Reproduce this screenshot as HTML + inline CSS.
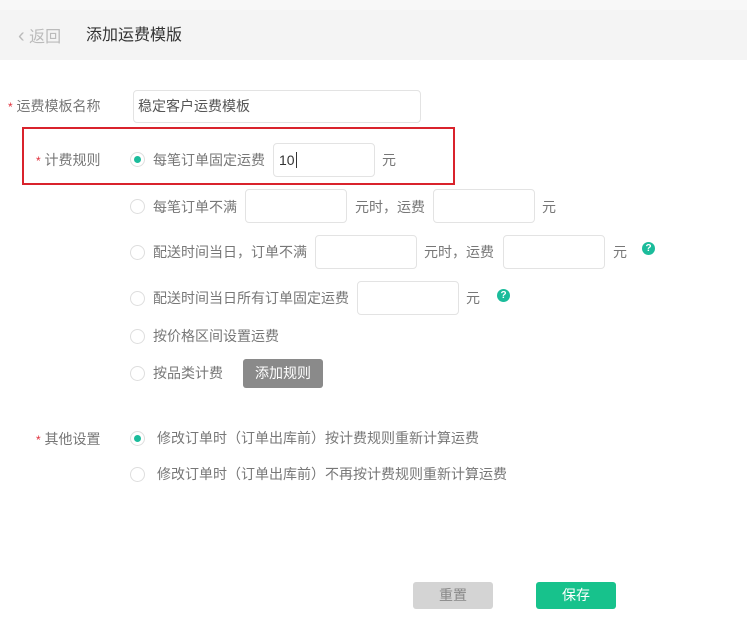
<!DOCTYPE html>
<html><head><meta charset="utf-8"><style>
*{margin:0;padding:0;box-sizing:border-box}
body{width:747px;height:619px;background:#fff;position:relative;overflow:hidden;font-family:"Liberation Sans","Noto Sans CJK SC",sans-serif;font-size:14px;color:#777}
.a{position:absolute;white-space:nowrap;line-height:16px}
.top{position:absolute;left:0;top:0;width:747px;height:10px;background:#f8f8f8}
.hd{position:absolute;left:0;top:10px;width:747px;height:50px;background:#f4f4f4}
.in{position:absolute;border:1px solid #e3e3e3;border-radius:4px;background:#fff;height:34px}
.r{position:absolute;width:15px;height:15px;border:1px solid #dedede;border-radius:50%;background:#fff}
.r.on::after{content:"";position:absolute;left:3px;top:3px;width:7px;height:7px;border-radius:50%;background:#1bbc9b}
.st{color:#e0303c;font-size:12px}
.q{position:absolute;width:13px;height:13px;border-radius:50%;background:#1bbc9b;color:#fff;font-size:10px;font-weight:bold;text-align:center;line-height:13px}
.btn{position:absolute;border-radius:3px;text-align:center;color:#fff;font-size:14px}
</style></head><body>
<div class="top"></div>
<div class="hd"></div>
<div class="a" style="left:18px;top:27px;font-size:16px;color:#bbb;line-height:18px"><span style="font-size:20px">‹</span> 返回</div>
<div class="a" style="left:86px;top:27px;font-size:16px;color:#333;line-height:18px">添加运费模版</div>

<div class="a" style="left:8px;top:98px"><span class="st">*</span> 运费模板名称</div>
<div class="in" style="left:133px;top:90px;width:288px;height:33px"></div>
<div class="a" style="left:138px;top:98px;color:#555">稳定客户运费模板</div>

<div style="position:absolute;left:22px;top:127px;width:433px;height:58px;border:2px solid #d9232c"></div>
<div class="a" style="left:36px;top:152px"><span class="st">*</span> 计费规则</div>
<div class="r on" style="left:130px;top:152px"></div>
<div class="a" style="left:153px;top:152px">每笔订单固定运费</div>
<div class="in" style="left:273px;top:143px;width:102px;height:34px"></div>
<div class="a" style="left:279px;top:152px;color:#333">10<span style="border-left:1px solid #333;margin-left:1px"></span></div>
<div class="a" style="left:382px;top:152px">元</div>

<div class="r" style="left:130px;top:199px"></div>
<div class="a" style="left:153px;top:199px">每笔订单不满</div>
<div class="in" style="left:245px;top:189px;width:102px"></div>
<div class="a" style="left:355px;top:199px">元时，运费</div>
<div class="in" style="left:433px;top:189px;width:102px"></div>
<div class="a" style="left:542px;top:199px">元</div>

<div class="r" style="left:130px;top:245px"></div>
<div class="a" style="left:153px;top:244px">配送时间当日，订单不满</div>
<div class="in" style="left:315px;top:235px;width:102px"></div>
<div class="a" style="left:424px;top:244px">元时，运费</div>
<div class="in" style="left:503px;top:235px;width:102px"></div>
<div class="a" style="left:613px;top:244px">元</div>
<div class="q" style="left:642px;top:242px">?</div>

<div class="r" style="left:130px;top:291px"></div>
<div class="a" style="left:153px;top:290px">配送时间当日所有订单固定运费</div>
<div class="in" style="left:357px;top:281px;width:102px"></div>
<div class="a" style="left:466px;top:290px">元</div>
<div class="q" style="left:497px;top:289px">?</div>

<div class="r" style="left:130px;top:329px"></div>
<div class="a" style="left:153px;top:328px">按价格区间设置运费</div>

<div class="r" style="left:130px;top:366px"></div>
<div class="a" style="left:153px;top:365px">按品类计费</div>
<div class="btn" style="left:243px;top:359px;width:80px;height:29px;line-height:29px;background:#8a8a8a">添加规则</div>

<div class="a" style="left:36px;top:431px"><span class="st">*</span> 其他设置</div>
<div class="r on" style="left:130px;top:431px"></div>
<div class="a" style="left:157px;top:430px">修改订单时（订单出库前）按计费规则重新计算运费</div>
<div class="r" style="left:130px;top:467px"></div>
<div class="a" style="left:157px;top:466px">修改订单时（订单出库前）不再按计费规则重新计算运费</div>

<div class="btn" style="left:413px;top:582px;width:80px;height:27px;line-height:27px;background:#d4d4d4;color:#888">重置</div>
<div class="btn" style="left:536px;top:582px;width:80px;height:27px;line-height:27px;background:#17c28c">保存</div>
</body></html>
